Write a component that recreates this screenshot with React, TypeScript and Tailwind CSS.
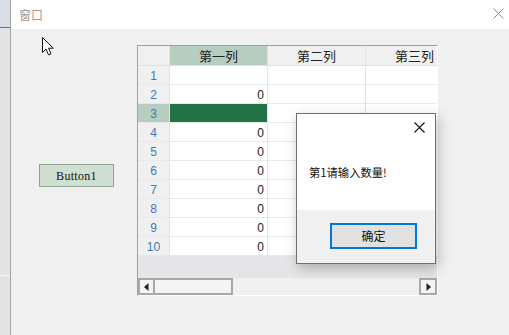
import React from "react";

const cjk = { fontFamily: '"Noto Sans CJK SC", "Noto Sans", sans-serif' };
const num = { fontFamily: '"Liberation Sans", Arial, sans-serif' };

function Cell({ w, children, className = "" }: { w: string; children?: React.ReactNode; className?: string }) {
  return <div className={`${w} h-full shrink-0 border-r border-[#e3e3e3] ${className}`}>{children}</div>;
}

export default function App() {
  const rows = [1, 2, 3, 4, 5, 6, 7, 8, 9, 10];
  return (
    <div className="relative w-[509px] h-[335px] overflow-hidden flex bg-[#f0f0f0]" style={cjk}>
      {/* left strip */}
      <div className="w-[11px] h-full shrink-0 flex flex-col border-r border-[#a3a3a3]">
        <div className="h-[28px] bg-[#d9dee6] border-b border-[#6f6f6f]" />
        <div className="h-[248px] bg-[#e3e3e3] border-b border-[#fafafa]" />
        <div className="flex-1 bg-[#e3e3e3]" />
      </div>
      {/* window */}
      <div className="flex-1 flex flex-col">
        <div className="h-[29px] bg-white flex items-center justify-between pl-[8px] pr-[5px]">
          <span className="text-[12px] text-[#a09a94] leading-none">窗口</span>
          <svg width="11" height="11" viewBox="0 0 11 11" className="mb-[2px]">
            <path d="M0.5 0.5 L10.5 10.5 M10.5 0.5 L0.5 10.5" stroke="#8a8a8a" strokeWidth="1" />
          </svg>
        </div>
        <div className="flex-1 flex items-start pl-[28px] pt-[16px] gap-[23px]">
          <button
            className="mt-[119px] w-[75px] h-[23px] bg-[#cfdfd1] border border-[#8ea48e] text-[12px] text-[#111] leading-none tracking-[0.3px]"
            style={{ fontFamily: '"Liberation Serif", serif' }}
          >
            Button1
          </button>
          {/* grid */}
          <div className="w-[301px] h-[251px] flex flex-col border-t border-l border-[#a0a0a0] border-r border-r-white border-b border-b-white overflow-hidden">
            <div className="h-[20px] flex border-b border-[#e0e0e0] bg-[#f0f0f0] shrink-0 text-[13px] text-[#222] leading-[19px]">
              <Cell w="w-[32px]" className="bg-[#f0f0f0]" />
              <Cell w="w-[98px]" className="bg-[#b6cdbf] text-center border-[#d8d8d8]">第一列</Cell>
              <Cell w="w-[98px]" className="text-center">第二列</Cell>
              <Cell w="w-[98px]" className="text-center">第三列</Cell>
            </div>
            {rows.map((r) => (
              <div key={r} className="h-[19px] flex border-b border-[#e8e8e8] shrink-0 text-[12px] leading-[18px]">
                <Cell
                  w="w-[32px]"
                  className={`text-center text-[#3b79b8] ${r === 3 ? "bg-[#b6cdbf]" : "bg-[#f0f0f0]"}`}
                >
                  <span style={num}>{r}</span>
                </Cell>
                <Cell
                  w="w-[98px]"
                  className={`text-right pr-[3px] text-[#222] ${r === 3 ? "bg-[#217346]" : "bg-white"}`}
                >
                  <span style={num}>{r === 1 || r === 3 ? "" : "0"}</span>
                </Cell>
                <Cell w="w-[98px]" className="bg-white" />
                <Cell w="w-[98px]" className="bg-white" />
              </div>
            ))}
            <div className="flex-1 bg-[#e5e5e7]" />
            <div className="h-[17px] shrink-0 flex bg-[#f0f0f0]">
              <div className="w-[17px] h-full border-2 border-[#a8a8a8] bg-[#f4f4f4] flex items-center justify-center">
                <svg width="5" height="8" viewBox="0 0 5 8">
                  <path d="M4.5 0 L0 4 L4.5 8 Z" fill="#222" />
                </svg>
              </div>
              <div className="w-[78px] h-full border-2 border-l-0 border-[#a8a8a8] bg-[#f4f4f4]" />
              <div className="flex-1" />
              <div className="w-[18px] h-full border-2 border-[#a8a8a8] bg-[#f4f4f4] flex items-center justify-center">
                <svg width="5" height="8" viewBox="0 0 5 8">
                  <path d="M0.5 0 L5 4 L0.5 8 Z" fill="#222" />
                </svg>
              </div>
            </div>
          </div>
        </div>
      </div>

      {/* cursor */}
      <svg className="absolute left-[41px] top-[36px]" width="14" height="21" viewBox="0 0 14 21">
        <path d="M1.5 1.5 L1.5 16.5 L5 13 L7.5 18.8 L10 17.8 L7.6 12.2 L12.3 12.2 Z" fill="white" stroke="#111" strokeWidth="1" strokeLinejoin="miter" />
      </svg>

      {/* dialog */}
      <div className="absolute left-[296px] top-[113px] w-[140px] h-[151px] flex flex-col border border-[#707070] bg-white shadow-[2px_4px_12px_rgba(0,0,0,0.25)]">
        <div className="h-[96px] flex flex-col">
          <div className="flex justify-end pt-[8px] pr-[10px]">
            <svg width="11" height="11" viewBox="0 0 11 11">
              <path d="M0.5 0.5 L10.5 10.5 M10.5 0.5 L0.5 10.5" stroke="#111" strokeWidth="1.1" />
            </svg>
          </div>
          <div className="pl-[12px] pt-[34px] text-[11.3px] leading-none text-[#111]">第1请输入数量!</div>
        </div>
        <div className="flex-1 bg-[#f0f0f0] flex justify-end items-start pt-[13px] pr-[18px]">
          <button className="w-[87px] h-[26px] border-2 border-[#0078d7] bg-[#e1e1e1] text-[12px] text-[#111] leading-none">
            确定
          </button>
        </div>
      </div>
    </div>
  );
}
